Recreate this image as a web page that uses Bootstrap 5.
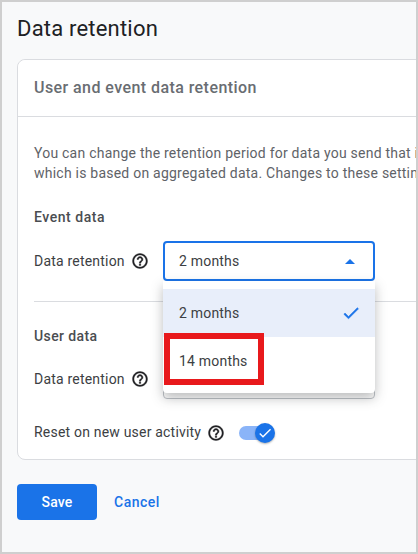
<!DOCTYPE html>
<html lang="en">
<head>
<meta charset="utf-8">
<title>Data retention</title>
<link href="https://cdn.jsdelivr.net/npm/bootstrap@5.3.0/dist/css/bootstrap.min.css" rel="stylesheet">
<style>
html,body{margin:0;height:554px;overflow:hidden;background:#f8f9fa;font-family:Roboto,"Liberation Sans",sans-serif;}
.frame{width:418px;height:554px;border:2px solid #cfcfcf;background:#f8f9fa;overflow:hidden;padding:0 0 0 15px;box-sizing:border-box;}
.page-title{font-family:Roboto,sans-serif;font-size:22px;font-weight:400;line-height:28px;color:#202124;margin:13px 0 16px;letter-spacing:.2px;}
.panel{width:520px;height:401px;border:1px solid #dadce0;border-radius:8px;background:#fff;}
.panel .card-header{height:57px;padding:0 16px;display:flex;align-items:center;background:#fff;border-bottom:1px solid #dadce0;font-size:16px;font-weight:500;color:#696d72;border-radius:8px 8px 0 0;letter-spacing:.43px;}
.panel .card-body{padding:26px 16px 0;position:relative;}
.intro{font-size:14px;line-height:20px;color:#5f6368;white-space:nowrap;margin:0 0 24px;letter-spacing:.23px;}
.subhead{font-size:14px;font-weight:500;line-height:20px;color:#4a4d51;margin:0 0 14px;letter-spacing:.55px;}
.subhead-user{margin-bottom:13px;letter-spacing:.4px;}
.field-row{display:flex;align-items:center;gap:6px;color:#3c4043;font-size:14px;letter-spacing:.2px;}
.field-row-reset{margin-top:23px;}
.field-label{width:91px;white-space:nowrap;}
.help-ico{width:18px;height:18px;fill:#202124;stroke:#202124;stroke-width:.5;flex:none;}
.help-gap{margin-right:8px;}
.select-box{width:212px;height:40px;border:2px solid #1a73e8;border-radius:4px;display:flex;align-items:center;justify-content:space-between;padding:0 18px 0 14px;background:#fff;color:#3c4043;font-size:14px;}
.select-closed{border:1px solid #bdc1c6;}
.caret-up{width:0;height:0;border-left:5px solid transparent;border-right:5px solid transparent;border-bottom:5px solid #1a73e8;}
.rule{width:384px;border-top:1px solid #dadce0;margin:20px 0 24px;}
.menu-pop{position:absolute;left:145px;top:164px;width:212px;height:112px;padding:8px 0;background:#fff;border:0;border-radius:0 0 4px 4px;box-shadow:0 5px 12px rgba(60,64,67,.35);z-index:5;min-width:0;margin:0;display:block;}
.menu-pop .dropdown-item{height:48px;padding:0 16px;display:flex;align-items:center;justify-content:space-between;font-size:14px;color:#3c4043;letter-spacing:.2px;}
.menu-pop .dropdown-item.picked{background:#e8eefa;}
.picked svg{width:20px;height:20px;fill:#1a73e8;stroke:#1a73e8;stroke-width:.6;margin-right:-2px;}
.red-mark{position:absolute;left:1px;top:52px;width:100px;height:52px;border:6px solid #e8191c;z-index:6;}
.toggle-track{position:relative;width:26px;height:14px;background:#8ab4f8;border-radius:7px;margin-left:2px;}
.toggle-thumb{position:absolute;right:-10px;top:-3px;width:20px;height:20px;border-radius:50%;background:#1a73e8;box-shadow:0 1px 2px rgba(60,64,67,.4);display:flex;align-items:center;justify-content:center;}
.toggle-thumb svg{width:16px;height:16px;fill:#fff;}
.actions{display:flex;align-items:center;gap:17px;margin-top:24px;}
.btn-save{width:80px;height:36px;padding:0;background:#1a73e8;border:0;border-radius:4px;font-size:14px;font-weight:500;color:#fff;letter-spacing:.2px;}
.btn-cancel{font-size:14px;font-weight:500;color:#1a73e8;text-decoration:none;letter-spacing:.5px;}
</style>
</head>
<body>
<div class="frame">
  <h1 class="page-title">Data retention</h1>
  <div class="card panel">
    <div class="card-header">User and event data retention</div>
    <div class="card-body">
      <p class="intro">You can change the retention period for data you send that is associated with cookies<br>which is based on aggregated data. Changes to these settings take effect</p>
      <p class="subhead">Event data</p>
      <div class="field-row">
        <span class="field-label">Data retention</span>
        <svg class="help-ico help-gap" viewBox="0 0 24 24"><path d="M11 18h2v-2h-2v2zm1-16C6.48 2 2 6.48 2 12s4.48 10 10 10 10-4.48 10-10S17.52 2 12 2zm0 18c-4.41 0-8-3.59-8-8s3.59-8 8-8 8 3.59 8 8-3.59 8-8 8zm0-14c-2.21 0-4 1.79-4 4h2c0-1.1.9-2 2-2s2 .9 2 2c0 2-3 1.75-3 5h2c0-2.25 3-2.5 3-5 0-2.21-1.79-4-4-4z"/></svg>
        <div class="select-box"><span>2 months</span><span class="caret-up"></span></div>
      </div>
      <div class="rule"></div>
      <p class="subhead subhead-user">User data</p>
      <div class="field-row">
        <span class="field-label">Data retention</span>
        <svg class="help-ico help-gap" viewBox="0 0 24 24"><path d="M11 18h2v-2h-2v2zm1-16C6.48 2 2 6.48 2 12s4.48 10 10 10 10-4.48 10-10S17.52 2 12 2zm0 18c-4.41 0-8-3.59-8-8s3.59-8 8-8 8 3.59 8 8-3.59 8-8 8zm0-14c-2.21 0-4 1.79-4 4h2c0-1.1.9-2 2-2s2 .9 2 2c0 2-3 1.75-3 5h2c0-2.25 3-2.5 3-5 0-2.21-1.79-4-4-4z"/></svg>
        <div class="select-box select-closed"></div>
      </div>
      <div class="field-row field-row-reset">
        <span class="text-nowrap">Reset on new user activity</span>
        <svg class="help-ico" viewBox="0 0 24 24"><path d="M11 18h2v-2h-2v2zm1-16C6.48 2 2 6.48 2 12s4.48 10 10 10 10-4.48 10-10S17.52 2 12 2zm0 18c-4.41 0-8-3.59-8-8s3.59-8 8-8 8 3.59 8 8-3.59 8-8 8zm0-14c-2.21 0-4 1.79-4 4h2c0-1.1.9-2 2-2s2 .9 2 2c0 2-3 1.75-3 5h2c0-2.25 3-2.5 3-5 0-2.21-1.79-4-4-4z"/></svg>
        <span class="toggle-track ms-2"><span class="toggle-thumb"><svg viewBox="0 0 24 24"><path d="M9 16.17 4.83 12l-1.42 1.41L9 19 21 7l-1.41-1.41z"/></svg></span></span>
      </div>
      <div class="dropdown-menu menu-pop">
        <a class="dropdown-item picked" href="#"><span>2 months</span><svg viewBox="0 0 24 24"><path d="M9 16.17 4.83 12l-1.42 1.41L9 19 21 7l-1.41-1.41z"/></svg></a>
        <a class="dropdown-item" href="#"><span>14 months</span></a>
        <div class="red-mark"></div>
      </div>
    </div>
  </div>
  <div class="actions">
    <button type="button" class="btn btn-primary btn-save">Save</button>
    <a class="btn-cancel" href="#">Cancel</a>
  </div>
</div>
</body>
</html>
